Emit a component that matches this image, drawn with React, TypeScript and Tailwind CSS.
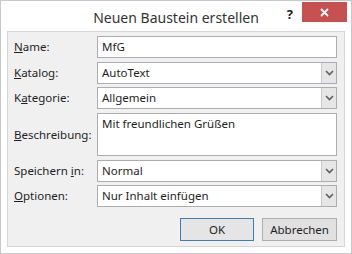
import React from "react";

const font = { fontFamily: '"Noto Sans", "Open Sans", sans-serif' };

const Chevron = () => (
  <svg width="9" height="6" viewBox="0 0 9 6">
    <path d="M1 1 L4.5 4.5 L8 1" fill="none" stroke="#606060" strokeWidth="1.6" />
  </svg>
);

const Label = ({ pre, key1, post }: { pre: string; key1: string; post: string }) => (
  <span className="w-[83px] shrink-0 text-[11.5px] text-[#1e1e1e]">
    {pre}
    <span className="underline underline-offset-[1px]">{key1}</span>
    {post}
  </span>
);

const TextBox = ({ value }: { value: string }) => (
  <div className="flex h-[22px] flex-1 items-center border border-[#abadb3] bg-white px-[4px] text-[11.5px] text-[#1e1e1e]">
    {value}
  </div>
);

const Combo = ({ value }: { value: string }) => (
  <div className="flex h-[22px] flex-1 border border-[#abadb3] bg-white text-[11.5px] text-[#1e1e1e]">
    <div className="flex flex-1 items-center px-[4px]">{value}</div>
    <div className="flex w-[15px] items-center justify-center border-l border-[#c9c9c9] bg-[#e6e6e6]">
      <Chevron />
    </div>
  </div>
);

export default function App() {
  return (
    <div
      className="flex h-[254px] w-[352px] flex-col border border-[#c8c8c8] bg-white"
      style={font}
    >
      <div className="relative h-[30px] shrink-0">
        <div className="pt-[6px] text-center text-[14px] text-[#333333]">
          Neuen Baustein erstellen
        </div>
        <div className="absolute right-[4px] top-[1px] flex items-start">
          <span className="mr-[9px] mt-[3px] text-[13px] font-bold text-[#222]">?</span>
          <div className="flex h-[20px] w-[45px] items-center justify-center bg-[#c75050]">
            <svg width="9" height="9" viewBox="0 0 9 9">
              <path d="M1 1 L8 8 M8 1 L1 8" stroke="#ffffff" strokeWidth="1.8" />
            </svg>
          </div>
        </div>
      </div>
      <div className="mx-[6px] flex flex-1 flex-col border border-[#d5d5d5] bg-[#f0f0f0] pl-[6px] pr-[7px] pt-[4px]">
        <div className="flex items-center">
          <Label pre="" key1="N" post="ame:" />
          <TextBox value="MfG" />
        </div>
        <div className="mt-[4px] flex items-center">
          <Label pre="" key1="K" post="atalog:" />
          <Combo value="AutoText" />
        </div>
        <div className="mt-[3px] flex items-center">
          <Label pre="K" key1="a" post="tegorie:" />
          <Combo value="Allgemein" />
        </div>
        <div className="mt-[4px] flex items-center">
          <Label pre="" key1="B" post="eschreibung:" />
          <div className="h-[43px] flex-1 border border-[#abadb3] bg-white px-[4px] pt-[1px] text-[11.5px] text-[#1e1e1e]">
            Mit freundlichen Grüßen
          </div>
        </div>
        <div className="mt-[4px] flex items-center">
          <Label pre="Speichern " key1="i" post="n:" />
          <Combo value="Normal" />
        </div>
        <div className="mt-[3px] flex items-center">
          <Label pre="" key1="O" post="ptionen:" />
          <Combo value="Nur Inhalt einfügen" />
        </div>
        <div className="mt-[11px] flex justify-end gap-[8px]">
          <button className="h-[23px] w-[74px] border border-[#3c7fb1] bg-[#e5e5e5] text-[11.5px] text-[#1e1e1e]">
            OK
          </button>
          <button className="h-[23px] w-[75px] border border-[#adadad] bg-[#e1e1e1] text-[11.5px] text-[#1e1e1e]">
            Abbrechen
          </button>
        </div>
      </div>
      <div className="h-[6px] shrink-0" />
    </div>
  );
}
